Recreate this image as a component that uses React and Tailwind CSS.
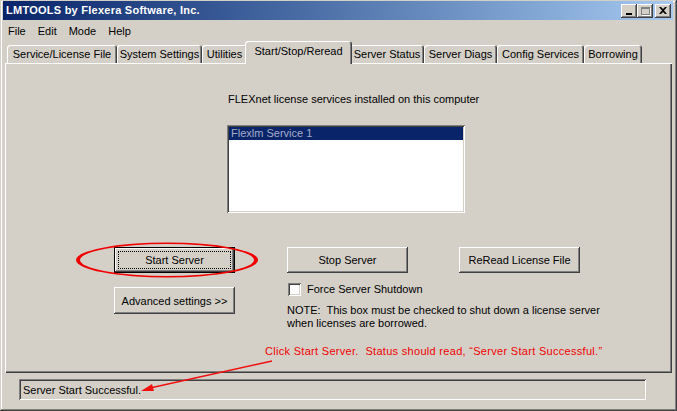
import React from 'react'

// Win2k style bevels
const raised =
  'shadow-[inset_-1px_-1px_#404040,inset_1px_1px_#ffffff,inset_-2px_-2px_#808080,inset_2px_2px_#d4d0c8]'
const sunken =
  'shadow-[inset_1px_1px_#808080,inset_-1px_-1px_#ffffff,inset_2px_2px_#404040,inset_-2px_-2px_#d4d0c8]'

const tabs = [
  { label: 'Service/License File', w: 'w-[110px]' },
  { label: 'System Settings', w: 'w-[85px]' },
  { label: 'Utilities', w: 'w-[45px]' },
  { label: 'Start/Stop/Reread', w: 'w-[107px]', active: true },
  { label: 'Server Status', w: 'w-[74px]' },
  { label: 'Server Diags', w: 'w-[73px]' },
  { label: 'Config Services', w: 'w-[87px]' },
  { label: 'Borrowing', w: 'w-[58px]' },
]

const CaptionButton = ({ children, className = '' }) => (
  <div className={`w-[16px] h-[14px] bg-[#d4d0c8] flex items-center justify-center ${raised} ${className}`}>
    {children}
  </div>
)

const Button = ({ children, className = '' }) => (
  <div className={`w-[121px] flex items-center justify-center pt-[1px] bg-[#d4d0c8] ${raised} ${className}`}>
    {children}
  </div>
)

const App = () => {
  return (
    <div className="relative w-[677px] h-[411px] bg-[#d4d0c8] pt-[1px] pl-[3px] pr-[4px] pb-[4px] flex flex-col text-[11px] leading-[13px] text-black font-['Liberation_Sans',Arial,sans-serif] shadow-[inset_-1px_-1px_#404040,inset_1px_1px_#d4d0c8,inset_-2px_-2px_#808080,inset_2px_2px_#ffffff] overflow-hidden">
      {/* title bar */}
      <div className="h-[19px] flex items-center pl-[3px] pr-[2px] bg-gradient-to-r from-[#0a246a] to-[#a6caf0]">
        <span className="flex-1 text-white font-bold text-[11px] tracking-[0.25px]">LMTOOLS by Flexera Software, Inc.</span>
        <CaptionButton>
          <span className="block w-[6px] h-[2px] bg-black mt-[6px] mr-[1px]" />
        </CaptionButton>
        <CaptionButton>
          <span className="block w-[9px] h-[8px] border border-[#808080] border-t-2 shadow-[1px_1px_#ffffff]" />
        </CaptionButton>
        <CaptionButton className="ml-[2px]">
          <svg width="8" height="7" viewBox="0 0 8 7">
            <path d="M0 0h2l2 2 2-2h2L5 3.5 8 7H6L4 5 2 7H0l3-3.5z" fill="#000" />
          </svg>
        </CaptionButton>
      </div>

      {/* menu bar */}
      <div className="h-[20px] flex items-center gap-[12px] pl-[5px] pt-[3px]">
        <span>File</span>
        <span>Edit</span>
        <span>Mode</span>
        <span>Help</span>
      </div>

      {/* tab strip */}
      <div className="h-[23px] flex items-end pl-[4px]">
        {tabs.map((t) =>
          t.active ? (
            <div
              key={t.label}
              className={`${t.w} relative z-10 h-[23px] mb-[-1px] mx-[-2px] bg-[#d4d0c8] rounded-t-[3px] flex justify-center pt-[4px] shadow-[inset_1px_1px_#ffffff,inset_-1px_0_#404040,inset_-2px_0_#808080]`}
            >
              {t.label}
            </div>
          ) : (
            <div
              key={t.label}
              className={`${t.w} h-[18px] rounded-t-[3px] flex justify-center pt-[3px] shadow-[inset_1px_1px_#ffffff,inset_-1px_0_#404040,inset_-2px_0_#808080]`}
            >
              {t.label}
            </div>
          )
        )}
      </div>

      {/* tab page */}
      <div className="ml-[2px] mr-[1px] h-[310px] flex flex-col shadow-[inset_1px_1px_#ffffff,inset_-1px_-1px_#404040,inset_-2px_-2px_#808080]">
        <p className="ml-[223px] mt-[30px]">FLEXnet license services installed on this computer</p>

        <div className={`ml-[222px] mt-[19px] w-[238px] h-[88px] bg-white p-[2px] ${sunken}`}>
          <div className="h-[13px] bg-[#0a246a] text-[#a4acc8] pl-[2px] leading-[13px]">Flexlm Service 1</div>
        </div>

        <div className="flex mt-[34px] ml-[109px]">
          <div className={`w-[121px] h-[26px] border border-black bg-[#d4d0c8] p-[3px] ${raised}`}>
            <div className="h-full border border-dotted border-black flex items-center justify-center pt-[1px]">
              Start Server
            </div>
          </div>
          <Button className="h-[26px] ml-[52px]">Stop Server</Button>
          <Button className="h-[26px] ml-[51px]">ReRead License File</Button>
        </div>

        <div className="flex items-start mt-[9px] ml-[109px]">
          <Button className="h-[27px] mt-[5px]">Advanced settings &gt;&gt;</Button>
          <div className="ml-[53px] flex flex-col">
            <div className="flex items-center gap-[6px]">
              <span className={`block w-[13px] h-[13px] bg-white ${sunken}`} />
              <span className="pt-[1px]">Force Server Shutdown</span>
            </div>
            <p className="mt-[8px] -ml-[1px]">
              NOTE:&nbsp; This box must be checked to shut down a license server
              <br />
              when licenses are borrowed.
            </p>
          </div>
        </div>
      </div>

      {/* status line */}
      <div className="flex-1 pt-[6px] pl-[16px]">
        <div className={`w-[627px] h-[21px] flex items-center pl-[4px] pt-[1px] ${sunken}`}>Server Start Successful.</div>
      </div>

      {/* red callout drawn over the dialog */}
      <svg className="absolute left-0 top-0 pointer-events-none" width="677" height="411" viewBox="0 0 677 411">
        <path
          fillRule="evenodd"
          fill="#f00000"
          d="M76 260a91 17.5 0 1 0 182 0a91 17.5 0 1 0 -182 0z M80 260a87 16 0 1 0 174 0a87 16 0 1 0 -174 0z"
        />
        <line x1="272" y1="361" x2="150" y2="388" stroke="#f01010" strokeWidth="1.5" />
        <polygon points="141,391 152,384 154,391" fill="#f01010" />
      </svg>
      <span className="absolute left-[265px] top-[345px] text-[#f00000] tracking-[0.3px]">
        Click Start Server.&nbsp; Status should read, “Server Start Successful.”
      </span>
    </div>
  )
}

export default App
